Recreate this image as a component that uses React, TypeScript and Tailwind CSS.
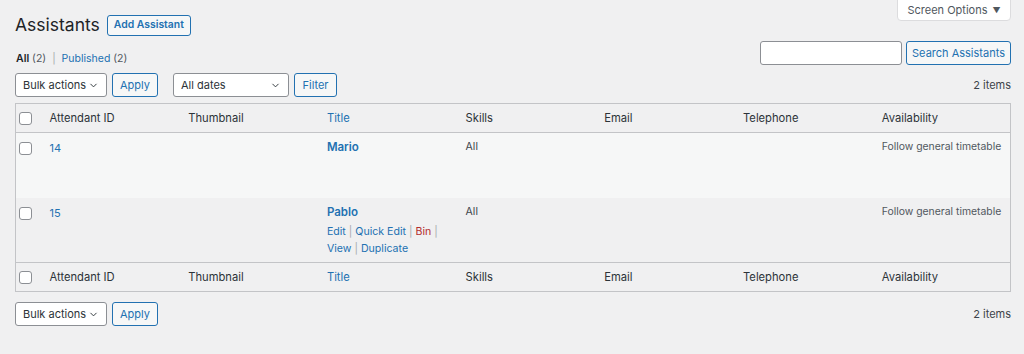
import React from "react";

const font = { fontFamily: "Inter, 'Noto Sans', 'Liberation Sans', sans-serif" };

function Chevron() {
  return (
    <svg width="11" height="11" viewBox="0 0 20 20" className="text-[#2c3338] shrink-0">
      <path d="M5 7.5l5 5 5-5" fill="none" stroke="currentColor" strokeWidth="1.7" strokeLinecap="round" strokeLinejoin="round" />
    </svg>
  );
}

function Select({ label, w }: { label: string; w: string }) {
  return (
    <div className={`${w} h-[24px] bg-white border border-[#8c8f94] rounded-[3px] flex items-center justify-between pl-[7px] pr-[7px] text-[11px] text-[#2c3338] whitespace-nowrap`}>
      <span>{label}</span>
      <Chevron />
    </div>
  );
}

function Btn({ label, w }: { label: string; w?: string }) {
  return (
    <div className={`${w ?? ""} h-[24px] px-[6px] bg-[#f6f7f7] border border-[#2271b1] rounded-[3px] flex items-center justify-center text-[11px] text-[#2271b1] whitespace-nowrap`}>
      {label}
    </div>
  );
}

function Check() {
  return <div className="w-[13px] h-[13px] rounded-[3px] border border-[#8c8f94] bg-white" />;
}

const cols = ["Attendant ID", "Thumbnail", "Title", "Skills", "Email", "Telephone", "Availability"];

function HeadRow({ top }: { top?: boolean }) {
  return (
    <tr className={`${top ? "border-b" : "border-t"} border-[#c3c4c7] bg-[#f0f0f1] h-[29px]`}>
      <td className="pl-[3px] align-middle"><Check /></td>
      {cols.map((c) => (
        <td key={c} className={`px-[10px] align-middle text-[11.2px] whitespace-nowrap ${c === "Title" ? "text-[#2271b1]" : "text-[#2c3338]"}`}>{c}</td>
      ))}
    </tr>
  );
}

function Row({ id, name, bg, actions }: { id: string; name: string; bg: string; actions: boolean }) {
  return (
    <tr className={`${bg} h-[65px]`}>
      <td className="pl-[3px] pt-[9px] align-top"><Check /></td>
      <td className="px-[10px] pt-[7px] align-top text-[11px] text-[#2271b1]">{id}</td>
      <td className="px-[10px] align-top"></td>
      <td className="px-[10px] pt-[6px] align-top">
        <div className="text-[11.5px] font-semibold text-[#2271b1] leading-[16px]">{name}</div>
        <div className={`text-[10.6px] leading-[17px] mt-[3px] whitespace-nowrap ${actions ? "" : "invisible"}`}>
          <div>
            <span className="text-[#2271b1]">Edit</span> <span className="text-[#a7aaad]">|</span>{" "}
            <span className="text-[#2271b1]">Quick Edit</span> <span className="text-[#a7aaad]">|</span>{" "}
            <span className="text-[#b32d2e]">Bin</span> <span className="text-[#a7aaad]">|</span>
          </div>
          <div>
            <span className="text-[#2271b1]">View</span> <span className="text-[#a7aaad]">|</span>{" "}
            <span className="text-[#2271b1]">Duplicate</span>
          </div>
        </div>
      </td>
      <td className="px-[10px] pt-[6px] align-top text-[10.5px] text-[#3c434a]">All</td>
      <td className="px-[10px] align-top"></td>
      <td className="px-[10px] align-top"></td>
      <td className="px-[10px] pt-[6px] align-top text-[10.4px] text-[#50575e] whitespace-nowrap">Follow general timetable</td>
    </tr>
  );
}

export default function App() {
  return (
    <div style={font} className="w-[1024px] h-[354px] bg-[#f0f0f1] relative overflow-hidden text-[#1d2327]">
      <div className="absolute right-[13px] top-[-4px] w-[114px] h-[25px] bg-white border border-[#dcdcde] rounded-b-[4px] flex items-center justify-center gap-[5px] text-[11px] text-[#50575e] pt-[3px]">
        <span>Screen Options</span>
        <span className="text-[8px]">▼</span>
      </div>
      <div className="pl-[15px] pr-[13px] pt-[14px]">
        <div className="flex items-center gap-[7px] h-[22px]">
          <h1 className="text-[17.5px] text-[#1d2327] leading-none">Assistants</h1>
          <div className="h-[21px] px-[6px] border border-[#2271b1] rounded-[3px] bg-[#f6f7f7] text-[10.4px] font-semibold text-[#2271b1] flex items-center whitespace-nowrap">Add Assistant</div>
        </div>
        <div className="flex justify-between items-start mt-[5px] h-[24px]">
          <div className="text-[10.5px] leading-[16px] mt-[10px] ml-[1px] text-[#50575e]">
            <span className="text-[#1d2327] font-semibold">All</span> (2) <span className="mx-[3px] text-[#a7aaad]">|</span> <span className="text-[#2271b1]">Published</span> (2)
          </div>
          <div className="flex gap-[4px]">
            <div className="w-[142px] h-[24px] bg-white border border-[#8c8f94] rounded-[3px]" />
            <Btn label="Search Assistants" w="w-[105px]" />
          </div>
        </div>
        <div className="flex items-center mt-[8px] h-[24px]">
          <Select label="Bulk actions" w="w-[92px]" />
          <div className="ml-[5px]"><Btn label="Apply" w="w-[46px]" /></div>
          <div className="ml-[15px]"><Select label="All dates" w="w-[116px]" /></div>
          <div className="ml-[5px]"><Btn label="Filter" w="w-[43px]" /></div>
          <div className="ml-auto text-[11px] text-[#3c434a]">2 items</div>
        </div>
        <table className="mt-[6px] w-full table-fixed border border-[#c3c4c7] border-collapse">
          <colgroup>
            <col className="w-[24px]" />
            {cols.map((c) => <col key={c} />)}
          </colgroup>
          <thead><HeadRow top /></thead>
          <tbody>
            <Row id="14" name="Mario" bg="bg-[#f6f7f7]" actions={false} />
            <Row id="15" name="Pablo" bg="bg-[#f0f0f1]" actions />
          </tbody>
          <tfoot><HeadRow /></tfoot>
        </table>
        <div className="flex items-center mt-[10px] h-[24px]">
          <Select label="Bulk actions" w="w-[92px]" />
          <div className="ml-[5px]"><Btn label="Apply" w="w-[46px]" /></div>
          <div className="ml-auto text-[11px] text-[#3c434a]">2 items</div>
        </div>
      </div>
    </div>
  );
}
